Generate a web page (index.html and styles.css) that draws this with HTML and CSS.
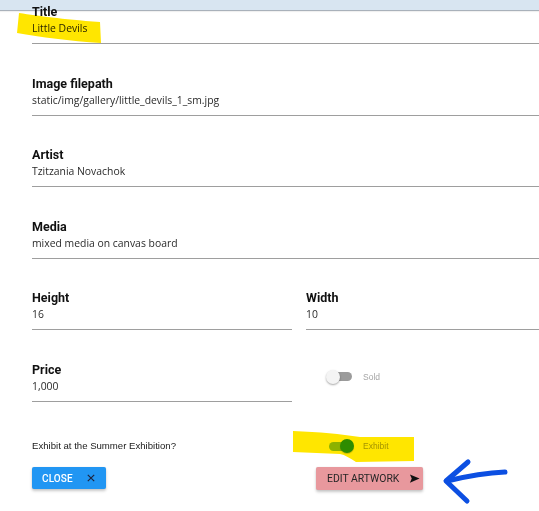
FILE: index.html
```html
<!DOCTYPE html>
<html lang="en">
<head>
<meta charset="utf-8">
<title>Edit Artwork</title>
<link rel="stylesheet" href="styles.css">
</head>
<body>
<div class="topbar"></div>
<form class="form">
  <div class="field">
    <label class="label">Title</label>
    <div class="value">Little Devils</div>
  </div>
  <div class="field">
    <label class="label">Image filepath</label>
    <div class="value">static/img/gallery/little_devils_1_sm.jpg</div>
  </div>
  <div class="field">
    <label class="label">Artist</label>
    <div class="value">Tzitzania Novachok</div>
  </div>
  <div class="field">
    <label class="label">Media</label>
    <div class="value">mixed media on canvas board</div>
  </div>
  <div class="row">
    <div class="field">
      <label class="label">Height</label>
      <div class="value">16</div>
    </div>
    <div class="field">
      <label class="label">Width</label>
      <div class="value">10</div>
    </div>
  </div>
  <div class="row">
    <div class="field">
      <label class="label">Price</label>
      <div class="value">1,000</div>
    </div>
    <div class="switch-cell sold-cell">
      <span class="switch"><span class="track"></span><span class="thumb"></span></span>
      <span class="switch-label">Sold</span>
    </div>
  </div>
  <div class="exhibit-row">
    <div class="question">Exhibit at the Summer Exhibition?</div>
    <div class="switch-cell">
      <span class="switch on"><span class="track"></span><span class="thumb"></span></span>
      <span class="switch-label">Exhibit</span>
    </div>
  </div>
  <div class="actions">
    <div class="action-cell">
      <button type="button" class="btn btn-close">CLOSE
        <svg class="icon-x" viewBox="0 0 10 10" width="8" height="8"><path d="M1 1 L9 9 M9 1 L1 9" stroke="#1d2540" stroke-width="1.5" fill="none"/></svg>
      </button>
    </div>
    <div class="action-cell">
      <button type="button" class="btn btn-edit">EDIT ARTWORK
        <svg class="icon-send" viewBox="0 0 24 24" width="11" height="11"><path d="M2 21 L23 12 L2 3 L6 12 Z" fill="#111"/></svg>
      </button>
    </div>
  </div>
</form>
<svg class="annotations" viewBox="0 0 539 511" width="539" height="511">
  <path class="marker" d="M19 13 C40 16 60 19 100 22 L101 43 C70 41 40 37 17 33 Z"/>
  <path class="marker" d="M293 431 C320 432 340 434 360 437 L414 437 L414 461 L356 462 C350 458 345 455 340 454 L293 452 Z"/>
  <g class="arrow">
    <path d="M505 472 Q480 473 447 481"/>
    <path d="M468 462 L446 481 L467 501"/>
  </g>
</svg>
</body>
</html>
```
FILE: styles.css
```css
html, body {
  margin: 0;
  padding: 0;
  background: #fff;
  overflow: hidden;
}
body {
  width: 539px;
  height: 511px;
  position: relative;
  font-family: "Open Sans", "Noto Sans", sans-serif;
}
.topbar {
  height: 10px;
  background: #d8e5f1;
  border-bottom: 1px solid #a9b1ba;
  box-shadow: 0 1px 1px rgba(0,0,0,0.06);
}
.form {
  position: relative;
  margin: -7px 0 0 32px;
  width: 534px;
  display: flex;
  flex-direction: column;
}
.field {
  display: flex;
  flex-direction: column;
  padding-bottom: 7px;
  border-bottom: 1px solid #9e9e9e;
}
.form > .field + .field,
.form > .field + .row,
.form > .row + .row {
  margin-top: 31.5px;
}
.label {
  font-family: Roboto, "Liberation Sans", sans-serif;
  font-weight: 700;
  font-size: 12.5px;
  line-height: 16px;
  color: #111;
}
.value {
  font-size: 10.4px;
  line-height: 16px;
  color: #2a2a2a;
}
.row {
  display: grid;
  grid-template-columns: 1fr 1fr;
  column-gap: 14px;
}
.switch-cell {
  display: flex;
  align-items: center;
  gap: 9px;
  padding-left: 20px;
  height: 14px;
}
.sold-cell {
  margin-top: 8px;
}
.switch {
  position: relative;
  width: 28px;
  height: 14px;
  display: inline-block;
}
.track {
  position: absolute;
  left: 3px;
  right: 2px;
  top: 2.5px;
  height: 9px;
  border-radius: 5px;
  background: #9b9b9b;
}
.thumb {
  position: absolute;
  left: 0;
  top: 0;
  width: 14px;
  height: 14px;
  border-radius: 50%;
  background: #f4f4f4;
  box-shadow: 0 1px 2px rgba(0,0,0,0.35);
}
.switch.on .track {
  background: #8cc63f;
}
.switch.on .thumb {
  left: auto;
  right: 0;
  background: #2e9b2a;
  box-shadow: 0 1px 1px rgba(0,0,0,0.2);
}
.switch-label {
  font-family: "Liberation Sans", Arial, sans-serif;
  font-size: 8.5px;
  color: #a5a5a5;
}
.exhibit-row {
  display: grid;
  grid-template-columns: 1fr 1fr;
  column-gap: 14px;
  margin-top: 36.5px;
  align-items: center;
  height: 16px;
}
.question {
  font-family: "Liberation Sans", Arial, sans-serif;
  font-size: 9.6px;
  line-height: 16px;
  color: #1a1a1a;
}
.actions {
  display: grid;
  grid-template-columns: 1fr 1fr;
  column-gap: 14px;
  margin-top: 13px;
}
.action-cell {
  display: flex;
  align-items: flex-start;
}
.btn {
  display: inline-flex;
  align-items: center;
  border: none;
  margin: 0;
  border-radius: 2px;
  box-shadow: 0 2px 3px rgba(0,0,0,0.22), 0 0 1px rgba(0,0,0,0.15);
  font-family: Roboto, "Liberation Sans", sans-serif;
  font-size: 10px;
  cursor: pointer;
}
.btn-close {
  height: 22px;
  width: 74px;
  padding: 0 0 0 10px;
  background: #2196f3;
  color: #fff;
  font-weight: 500;
  letter-spacing: 0.1px;
}
.icon-x {
  margin-left: 14px;
}
.btn-edit {
  margin-left: 10px;
  height: 23px;
  width: 107px;
  padding: 0 0 0 11px;
  background: #e8989d;
  color: #262626;
  font-size: 10.4px;
  font-weight: 400;
}
.icon-send {
  margin-left: 10px;
}
.annotations {
  position: absolute;
  left: 0;
  top: 0;
  pointer-events: none;
}
.marker {
  fill: #ffe600;
  mix-blend-mode: multiply;
}
.arrow path {
  fill: none;
  stroke: #0c4fe2;
  stroke-width: 5;
  stroke-linecap: round;
  stroke-linejoin: round;
}
```
